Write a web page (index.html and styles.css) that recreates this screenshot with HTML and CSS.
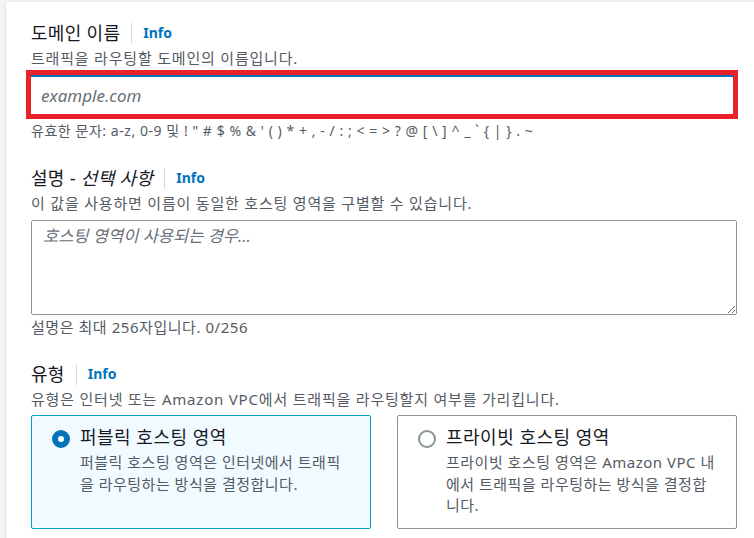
FILE: index.html
```html
<!DOCTYPE html>
<html lang="ko">
<head>
<meta charset="utf-8">
<link rel="stylesheet" href="styles.css">
</head>
<body>
<div class="card">
  <div class="form">
    <div class="field field-name">
      <div class="label-row"><span class="label">도메인 이름</span><span class="sep"></span><a class="info">Info</a></div>
      <div class="desc">트래픽을 라우팅할 도메인의 이름입니다.</div>
      <div class="input-wrap"><input class="input" type="text" placeholder="example.com"></div>
      <div class="hint hint-chars">유효한 문자: a-z, 0-9 및 ! " # $ % &amp; ' ( ) * + , - / : ; &lt; = &gt; ? @ [ \ ] ^ _ ` { | } . ~</div>
    </div>
    <div class="field field-desc">
      <div class="label-row"><span class="label">설명 - <i>선택 사항</i></span><span class="sep"></span><a class="info">Info</a></div>
      <div class="desc">이 값을 사용하면 이름이 동일한 호스팅 영역을 구별할 수 있습니다.</div>
      <textarea class="textarea" placeholder="호스팅 영역이 사용되는 경우..."></textarea>
      <div class="hint hint-count">설명은 최대 256자입니다. 0/256</div>
    </div>
    <div class="field field-type">
      <div class="label-row"><span class="label">유형</span><span class="sep"></span><a class="info">Info</a></div>
      <div class="desc">유형은 인터넷 또는 Amazon VPC에서 트래픽을 라우팅할지 여부를 가리킵니다.</div>
      <div class="tiles">
        <div class="tile selected">
          <svg class="radio" width="18" height="18" viewBox="0 0 18 18"><circle cx="9" cy="9" r="6" fill="#fff" stroke="#0073bb" stroke-width="6"/></svg>
          <div class="tile-text">
            <div class="tile-title">퍼블릭 호스팅 영역</div>
            <div class="tile-desc">퍼블릭 호스팅 영역은 인터넷에서 트래픽<br>을 라우팅하는 방식을 결정합니다.</div>
          </div>
        </div>
        <div class="tile">
          <svg class="radio" width="18" height="18" viewBox="0 0 18 18"><circle cx="9" cy="9" r="8" fill="#fff" stroke="#879596" stroke-width="2"/></svg>
          <div class="tile-text">
            <div class="tile-title">프라이빗 호스팅 영역</div>
            <div class="tile-desc">프라이빗 호스팅 영역은 Amazon VPC 내<br>에서 트래픽을 라우팅하는 방식을 결정합<br>니다.</div>
          </div>
        </div>
      </div>
    </div>
  </div>
</div>
</body>
</html>
```

FILE: styles.css
```css
* { box-sizing: border-box; }
html, body { margin: 0; padding: 0; }
body {
  background: #f2f3f3;
  font-family: "Noto Sans", "Noto Sans CJK KR", sans-serif;
  color: #16191f;
  width: 754px;
  height: 538px;
  overflow: hidden;
}
.card {
  margin-left: 5px;
  margin-top: 1px;
  background: #fff;
  border-left: 1px solid #e1e4e4;
  border-top: 1px solid #eaeded;
  height: 537px;
  overflow: hidden;
  padding: 20px 17px 0 25px;
}
.form { display: flex; flex-direction: column; }
.field { display: flex; flex-direction: column; }
.field-desc { margin-top: 26px; }
.field-type { margin-top: 26px; }
.label-row { display: flex; align-items: center; height: 22px; }
.label { font-size: 18px; letter-spacing: 0.3px; line-height: 22px; color: #16191f; }
.label i { font-style: italic; }
.sep { width: 1px; height: 21px; background: #d5dbdb; margin: 0 11px 0 11px; }
.info { font-size: 14px; font-weight: 700; color: #0073bb; line-height: 22px; }
.desc { font-size: 15px; letter-spacing: 0.8px; line-height: 20px; color: #545b64; margin-top: 4px; white-space: nowrap; }
.input-wrap {
  margin-top: 2px;
  margin-left: -5px;
  border: 5px solid #e8212a;
  width: 712px;
  height: 49px;
}
.input {
  display: block;
  width: 100%;
  height: 100%;
  border: none;
  border-top: 2px solid #0073bb;
  padding: 0 10px;
  font-family: "Noto Sans", "Noto Sans CJK KR", sans-serif;
  font-size: 17px;
  outline: none;
}
.input::placeholder { color: #687078; font-style: italic; }
.hint { line-height: 20px; color: #545b64; margin-top: 2px; white-space: nowrap; }
.hint-chars { font-size: 14px; letter-spacing: 0.55px; }
.hint-count { font-size: 15px; letter-spacing: 0.55px; }
.textarea {
  display: block;
  margin-top: 7px;
  width: 706px;
  height: 95px;
  border: 1px solid #879596;
  border-radius: 2px;
  padding: 4px 11px;
  font-family: "Noto Sans", "Noto Sans CJK KR", sans-serif;
  font-size: 16.5px;
  line-height: 22px;
  letter-spacing: 0;
  resize: vertical;
}
.textarea::placeholder { color: #687078; font-style: italic; }
.tiles { display: grid; grid-template-columns: 340px 340px; gap: 26px; margin-top: 6px; }
.tile {
  display: flex;
  align-items: flex-start;
  gap: 10px;
  height: 114px;
  border: 1px solid #879596;
  border-radius: 2px;
  padding: 10px 12px 0 20px;
  background: #fff;
}
.tile.selected { background: #f1faff; border-color: #00a1c9; }
.radio { flex: none; margin-top: 4px; }
.tile-text { min-width: 0; flex: 1; }
.tile-title { font-size: 18px; letter-spacing: 0.5px; line-height: 22px; color: #16191f; }
.tile-desc { font-size: 15px; letter-spacing: 0.5px; line-height: 21.5px; color: #545b64; margin-top: 4px; white-space: nowrap; }
```
